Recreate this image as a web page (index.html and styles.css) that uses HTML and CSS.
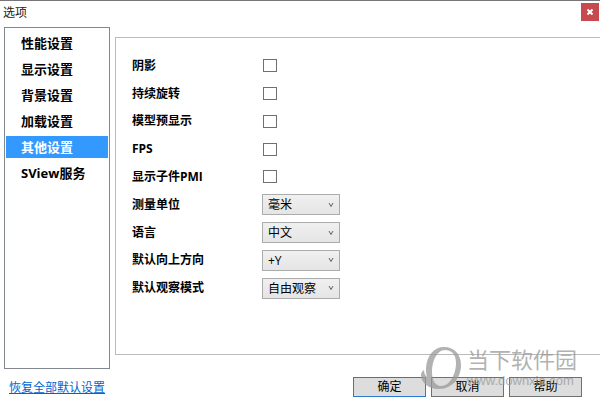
FILE: index.html
```html
<!DOCTYPE html>
<html lang="zh-CN">
<head>
    <meta charset="UTF-8">
    <meta name="viewport" content="width=device-width, initial-scale=1.0">
    <title>选项</title>
    <link rel="stylesheet" href="styles.css">
</head>
<body>
<header class="title-bar">
    <h1>选项</h1>
    <button class="close-button" type="button" aria-label="关闭">
        <svg width="6" height="6" viewBox="0 0 6 6"><path d="M0.5 0.5L5.5 5.5M5.5 0.5L0.5 5.5"/></svg>
    </button>
</header>
<main class="content">
    <nav class="side-nav">
        <button type="button">性能设置</button>
        <button type="button">显示设置</button>
        <button type="button">背景设置</button>
        <button type="button">加载设置</button>
        <button type="button" class="active">其他设置</button>
        <button type="button">SView服务</button>
    </nav>
    <form class="panel">
        <label for="shadow">阴影</label>
        <input type="checkbox" id="shadow">
        <label for="rotate">持续旋转</label>
        <input type="checkbox" id="rotate">
        <label for="preview">模型预显示</label>
        <input type="checkbox" id="preview">
        <label for="fps">FPS</label>
        <input type="checkbox" id="fps">
        <label for="pmi">显示子件PMI</label>
        <input type="checkbox" id="pmi">
        <label for="unit">测量单位</label>
        <div class="select-box">
            <select id="unit"><option>毫米</option></select>
            <svg width="6" height="6" viewBox="0 0 6 6"><path d="M1 1L3 4.5L5 1"/></svg>
        </div>
        <label for="language">语言</label>
        <div class="select-box">
            <select id="language"><option>中文</option></select>
            <svg width="6" height="6" viewBox="0 0 6 6"><path d="M1 1L3 4.5L5 1"/></svg>
        </div>
        <label for="direction">默认向上方向</label>
        <div class="select-box">
            <select id="direction"><option>+Y</option></select>
            <svg width="6" height="6" viewBox="0 0 6 6"><path d="M1 1L3 4.5L5 1"/></svg>
        </div>
        <label for="view">默认观察模式</label>
        <div class="select-box">
            <select id="view"><option>自由观察</option></select>
            <svg width="6" height="6" viewBox="0 0 6 6"><path d="M1 1L3 4.5L5 1"/></svg>
        </div>
    </form>
</main>
<footer class="footer">
    <a href="#">恢复全部默认设置</a>
    <div class="button-group">
        <button type="button" class="primary">确定</button>
        <button type="button">取消</button>
        <button type="button">帮助</button>
    </div>
</footer>
<div class="watermark">
    <svg width="42" height="44" viewBox="0 0 42 44">
        <path fill-rule="evenodd" d="M24 1C35 1 41 9 41 19C41 32 32 43 19 43C9 43 1 37 1 29C1 27 2 25 4 24C4 27 5 29 7 31C6 28 6 25 6 22C7 9 14 1 24 1ZM25 4C17 4 12 15 12 26C12 35 16 40 21 40C30 40 36 28 36 17C36 9 32 4 25 4Z"/>
    </svg>
    <div>
        <div class="watermark-name">当下软件园</div>
        <div class="watermark-url">www.downxia.com</div>
    </div>
</div>
</body>
</html>
```
FILE: styles.css
```css
* {
    box-sizing: border-box;
}

body {
    display: flex;
    flex-direction: column;
    min-height: 100vh;
    margin: 0;
    border-top: 1px solid #777;
    background-color: #fff;
    color: #000;
    font-family: "Open Sans", "Noto Sans CJK SC", sans-serif;
    font-size: 12px;
}

button, select {
    font-family: inherit;
    font-size: inherit;
    color: inherit;
}

.title-bar {
    display: flex;
    justify-content: space-between;
    align-items: center;
    height: 22px;
    padding: 0 1px 0 3px;
}

.title-bar h1 {
    margin: 0;
    font-size: 12px;
    font-weight: normal;
    color: #222;
}

.close-button {
    display: flex;
    align-items: center;
    justify-content: center;
    width: 18px;
    height: 18px;
    padding: 0;
    border: none;
    background-color: #c74b4e;
}

.close-button svg {
    fill: none;
    stroke: #fff;
    stroke-width: 2;
}

.content {
    flex: 1;
    display: flex;
    gap: 5px;
    padding: 4px 0 0 4px;
}

.side-nav {
    display: flex;
    flex-direction: column;
    gap: 4px;
    width: 106px;
    padding: 4px 1px;
    border: 1px solid #828790;
}

.side-nav button {
    height: 22px;
    padding: 0 0 0 15px;
    border: none;
    background-color: transparent;
    font-size: 13px;
    font-weight: bold;
    line-height: 20px;
    text-align: left;
}

.side-nav .active {
    background-color: #3399ff;
    color: #fff;
}

.panel {
    flex: 1;
    display: grid;
    grid-template-columns: 130px 1fr;
    grid-auto-rows: 1fr;
    align-items: center;
    margin: 10px 0 14px;
    padding: 14px 0 52px 16px;
    border: 1px solid #bbb;
    border-right: none;
}

.panel label {
    font-weight: bold;
    line-height: 20px;
}

.panel input {
    appearance: none;
    width: 14px;
    height: 13px;
    margin: 0 1px;
    border: 1px solid #707070;
    background-color: #fff;
}

.select-box {
    display: grid;
    align-items: center;
    width: 78px;
}

.select-box select,
.select-box svg {
    grid-area: 1 / 1;
}

.select-box select {
    appearance: none;
    height: 21px;
    padding: 0 5px;
    border: 1px solid #acacac;
    border-radius: 0;
    background: linear-gradient(#f0f0f0, #e5e5e5);
}

.select-box svg {
    justify-self: end;
    margin-right: 6px;
    fill: none;
    stroke: #606060;
    pointer-events: none;
}

.footer {
    display: flex;
    justify-content: space-between;
    align-items: center;
    height: 40px;
    padding: 0 18px 4px 9px;
}

.footer a {
    color: #0066cc;
}

.button-group {
    display: flex;
    gap: 5px;
}

.button-group button {
    width: 73px;
    height: 20px;
    padding: 0;
    border: 1px solid #707070;
    background-color: #ddd;
    line-height: 18px;
}

.button-group .primary {
    border-color: #2a7ad4;
}

/* 右下角水印 */
.watermark {
    position: absolute;
    right: 23px;
    bottom: 19px;
    display: flex;
    gap: 5px;
    color: #999;
    opacity: 0.75;
    pointer-events: none;
}

.watermark svg {
    fill: #999;
}

.watermark-name {
    font-size: 22px;
    line-height: 26px;
}

.watermark-url {
    font-family: "Liberation Sans", sans-serif;
    font-size: 13px;
    line-height: 18px;
}
```
